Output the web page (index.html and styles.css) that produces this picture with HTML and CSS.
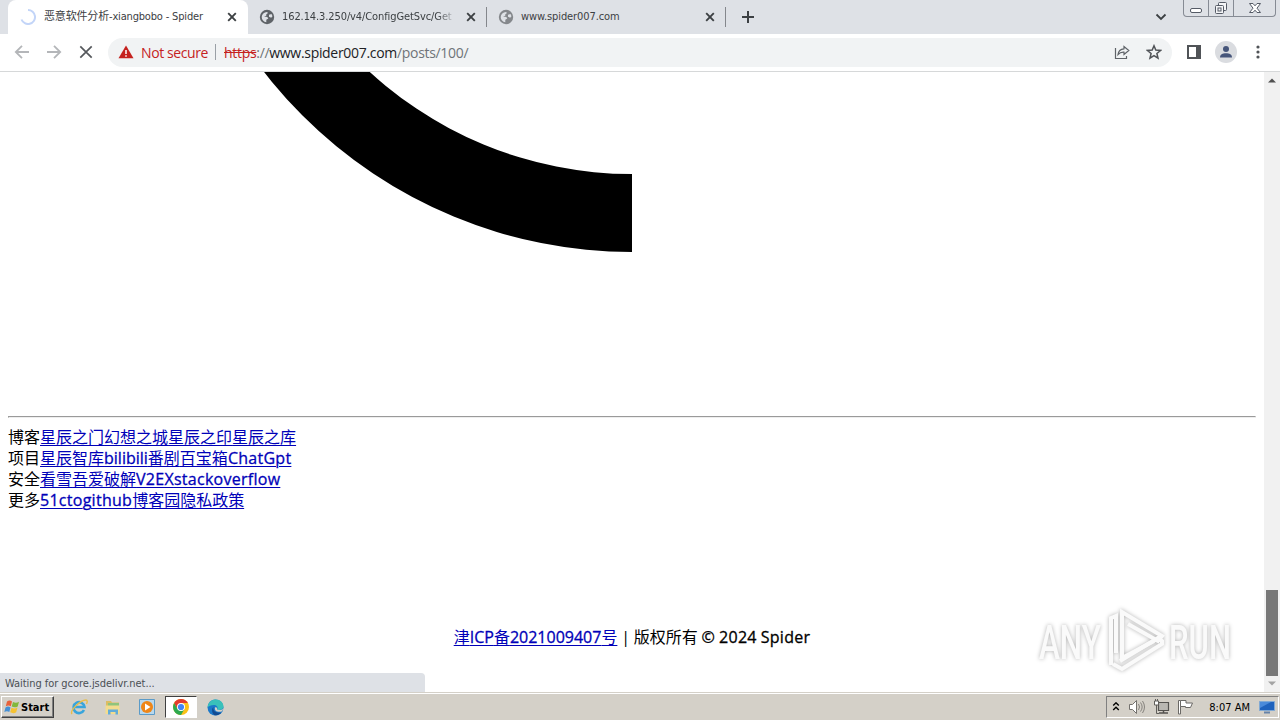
FILE: index.html
```html
<!DOCTYPE html>
<html lang="zh">
<head>
    <meta charset="UTF-8">
    <meta name="viewport" content="width=device-width, initial-scale=1.0">
    <title>恶意软件分析-xiangbobo - Spider</title>
    <link rel="stylesheet" href="styles.css">
</head>
<body>

<!-- shared icons -->
<svg class="defs" width="0" height="0">
    <symbol id="close" viewBox="0 0 10 10"><path d="M1.2 1.2l7.6 7.6M8.800 1.2L1.2 8.800" fill="none" stroke="#3c4043" stroke-width="1.9"/></symbol>
    <symbol id="globe" viewBox="0 0 16 16">
        <circle cx="8" cy="8" r="7.2" fill="currentColor"/>
        <path d="M2.700 8C3 4.800 5 3 8 2.900L9 4 7.300 5.200v1.500L5 7.600l3.300.3 1 1.700-2 1.100v2.500C4.800 12.800 2.700 11 2.700 8zM10 5.800l2.500-.8 1 2.300-1.300 1.400L10 7.700z" fill="#dee1e6"/>
    </symbol>
</svg>

<div class="tab-strip">
    <div class="tab active">
        <svg class="spinner" width="16" height="16" viewBox="0 0 16 16"><path d="M8 1a7 7 0 1 1-6.500 9.500" fill="none" stroke="#c3d5f8" stroke-width="2"/></svg>
        <span class="tab-title title-one">恶意软件分析-xiangbobo - Spider</span>
        <svg class="tab-close" width="10" height="10"><use href="#close"/></svg>
    </div>
    <div class="tab">
        <svg class="globe" width="16" height="16"><use href="#globe"/></svg>
        <span class="tab-title title-two">162.14.3.250/v4/ConfigGetSvc/Get</span>
        <svg class="tab-close" width="10" height="10"><use href="#close"/></svg>
    </div>
    <div class="tab">
        <svg class="globe light" width="16" height="16"><use href="#globe"/></svg>
        <span class="tab-title title-three">www.spider007.com</span>
        <svg class="tab-close" width="10" height="10"><use href="#close"/></svg>
    </div>
    <svg class="new-tab" width="14" height="14" viewBox="0 0 14 14"><path d="M7 1v12M1 7h12" stroke="#3c4043" stroke-width="2"/></svg>
    <svg class="tab-search" width="12" height="8" viewBox="0 0 12 8"><path d="M1.5 1.5L6 6l4.500-4.500" fill="none" stroke="#3c4043" stroke-width="1.8"/></svg>
    <div class="window-buttons">
        <span class="win-btn min"><svg width="14" height="14" viewBox="0 0 14 14"><rect x="1.500" y="7.500" width="11" height="4" rx="1.500" fill="#fff" stroke="#555b66"/></svg></span>
        <span class="win-btn restore"><svg width="14" height="14" viewBox="0 0 14 14" fill="#f4f5f7" stroke="#555b66"><rect x="4.500" y="1.500" width="8" height="8" rx="1"/><rect x="1.500" y="4.500" width="8" height="8" rx="1"/><rect x="4" y="7" width="3" height="3"/></svg></span>
        <span class="win-btn exit"><svg width="14" height="14" viewBox="0 0 14 14"><path d="M1.500 2.500h3.500l2 2.300 2-2.300h3.500L9 7.200l3.500 4.300H9L7 9.200l-2 2.300H1.500L5 7.200z" fill="#fff" stroke="#555b66"/></svg></span>
    </div>
</div>

<div class="toolbar">
    <div class="nav">
        <svg width="16" height="16" viewBox="0 0 16 16" fill="none" stroke="#b4b6b9" stroke-width="1.800"><path d="M15 8H2.200M8 1.800L1.800 8 8 14.200"/></svg>
        <svg width="16" height="16" viewBox="0 0 16 16" fill="none" stroke="#b4b6b9" stroke-width="1.800"><path d="M1 8h12.800M8 1.800L14.200 8 8 14.200"/></svg>
        <svg width="16" height="16" viewBox="0 0 16 16" fill="none" stroke="#55585c" stroke-width="1.700"><path d="M2.300 2.300l11.400 11.400M13.700 2.300L2.300 13.700"/></svg>
    </div>
    <div class="omnibox">
        <svg class="warning" width="16" height="14" viewBox="0 0 16 14"><path d="M8 .5L15.500 13.300H.5z" fill="#c5221f"/><path d="M8 5v4M8 10.200v1.600" stroke="#fff" stroke-width="1.500"/></svg>
        <span class="not-secure">Not secure</span>
        <span class="separator"></span>
        <span class="url"><span class="scheme">https</span><span class="path">://</span>www.spider007.com<span class="path">/posts/100/</span></span>
        <svg class="share" width="16" height="16" viewBox="0 0 16 16" fill="none" stroke="#5f6368" stroke-width="1.200"><path d="M1.500 4v10.500h11V12"/><path d="M4 10.500c.4-3.800 2.500-5.500 6-5.700V2.500l4.800 4-4.800 4V8.200C7.300 8 5.500 8.800 4 10.500z"/></svg>
        <svg class="star" width="16" height="16" viewBox="0 0 16 16"><path d="M8 1.800l1.800 4.300 4.700.4-3.600 3 1.100 4.600-4-2.500-4 2.500 1.100-4.600-3.600-3 4.700-.4z" fill="none" stroke="#505357" stroke-width="1.500"/></svg>
    </div>
    <svg class="side-panel" width="14" height="14" viewBox="0 0 14 14"><path d="M1 1h12v12H1z" fill="none" stroke="#505357" stroke-width="2"/><path d="M9 1h4v12H9z" fill="#505357"/></svg>
    <svg class="avatar" width="22" height="22" viewBox="0 0 22 22"><circle cx="11" cy="11" r="11" fill="#dadce0"/><circle cx="11" cy="8" r="3" fill="#46557a"/><path d="M5 16.500c0-3 2.500-4.200 6-4.200s6 1.200 6 4.200z" fill="#46557a"/></svg>
    <svg class="menu" width="4" height="14" viewBox="0 0 4 14" fill="#505357"><circle cx="2" cy="2" r="1.600"/><circle cx="2" cy="7" r="1.600"/><circle cx="2" cy="12" r="1.600"/></svg>
</div>

<div class="viewport">
    <div class="page">
        <svg class="arc" width="1248" height="180" viewBox="8 72 1248 180"><path d="M632 252A466 466 0 0 1 166 -214H244A388 388 0 0 0 632 174z"/></svg>
        <hr>
        <div class="links">
            <div>博客<a href="#">星辰之门</a><a href="#">幻想之城</a><a href="#">星辰之印</a><a href="#">星辰之库</a></div>
            <div>项目<a href="#">星辰智库</a><a href="#" class="en bili">bilibili</a><a href="#">番剧</a><a href="#">百宝箱</a><a href="#" class="en">ChatGpt</a></div>
            <div>安全<a href="#">看雪</a><a href="#">吾爱破解</a><a href="#" class="en">V2EX</a><a href="#" class="en">stackoverflow</a></div>
            <div>更多<a href="#" class="en">51cto</a><a href="#" class="en">github</a><a href="#">博客园</a><a href="#">隐私政策</a></div>
        </div>
        <p class="copyright"><a href="#">津<span class="en icp">ICP</span>备<span class="en num">2021009407</span>号</a> | 版权所有 <span class="en">© 2024 Spider</span></p>
        <svg class="watermark" width="204" height="70" viewBox="1034 606 204 70">
            <g class="mark-text">
                <text x="1039" y="659" textLength="62" lengthAdjust="spacingAndGlyphs">ANY</text>
                <text x="1169" y="659" textLength="62" lengthAdjust="spacingAndGlyphs">RUN</text>
            </g>
            <g class="mark-play">
                <path d="M1122 628v30l32-17"/>
                <path d="M1111 665v-47l5-2v37M1122 640v-28l40 24-4 5-30-17M1113 664l9 5 40-25v-3l-4-3-38 23"/>
            </g>
        </svg>
    </div>
    <div class="scrollbar">
        <svg width="8" height="5" viewBox="0 0 8 5"><path d="M0 4.500L4 .5l4 4z" fill="#505050"/></svg>
        <div class="thumb"></div>
        <svg class="down" width="8" height="5" viewBox="0 0 8 5"><path d="M0 .5l4 4 4-4z" fill="#a3a3a3"/></svg>
    </div>
    <div class="status">Waiting for gcore.jsdelivr.net...</div>
</div>

<div class="taskbar">
    <div class="start">
        <svg width="17" height="16" viewBox="0 0 17 16"><path d="M3 2.500c2-1.500 3.700-1 5 0L6.800 7.300c-1.500-1-3-1.200-5 0z" fill="#e8623a"/><path d="M9 3c2 1 4 1 6-.2L13.700 7.500c-2 1.200-4 1-6 0z" fill="#82b83c"/><path d="M1.500 8.500c2-1.400 3.500-1 5 0L5.300 13c-1.500-1-3-1.200-5 0z" fill="#4590d5"/><path d="M7.500 8.800c2 1 4 1 6-.2l-1.300 4.700c-2 1.200-4 1-6 0z" fill="#f5c232"/></svg>
        <span>Start</span>
    </div>
    <div class="quick ie"><svg width="18" height="18" viewBox="0 0 18 18"><path d="M14 12A5.500 5.500 0 1 1 14.500 9H5" fill="none" stroke="#39a5dc" stroke-width="2.600"/><path d="M2 16C-.5 13 10 2 16 2c1.500 0 1.500 2 .5 4" fill="none" stroke="#e9bd48" stroke-width="1.400"/></svg></div>
    <div class="quick"><svg width="18" height="18" viewBox="0 0 18 18"><path d="M2 3h5l1 1.500h7V15H2z" fill="#dcbd62"/><path d="M4 5h11v8H4z" fill="#8fc47c"/><path d="M1.500 7.500h14V16h-14z" fill="#f3dc8e"/><path d="M4 16.500v-5h10v5h-2.500V14h-5v2.500z" fill="#62acd8"/></svg></div>
    <div class="quick"><svg width="18" height="18" viewBox="0 0 18 18"><path d="M1.500 1.500h15v15h-15z" fill="#b8d8ed" stroke="#5b9bc8"/><circle cx="9" cy="9" r="6" fill="#ee8618"/><path d="M7 5.500v7l5.500-3.500z" fill="#fff"/></svg></div>
    <div class="quick pressed"><svg width="16" height="16" viewBox="0 0 16 16"><circle cx="8" cy="8" r="8" fill="#fbc116"/><path d="M1.100 4A8 8 0 0 1 14.900 4H8L4.500 10z" fill="#e33b2e"/><path d="M1.100 4A8 8 0 0 0 8 16l3.500-6H4.500z" fill="#2da94f"/><circle cx="8" cy="8" r="4" fill="#fff"/><circle cx="8" cy="8" r="3.100" fill="#4285f4"/></svg></div>
    <div class="quick edge"><svg width="17" height="17" viewBox="0 0 17 17"><circle cx="8.500" cy="8.500" r="8" fill="#1b78c9"/><path d="M.5 8.500C1 3 5 .5 8.500.5c5 0 8 3.500 8 7 0 3-4 4-6.500 3 1.500-2 0-4.500-3-4.500-3 0-5.500 1-6.500 2.500z" fill="#39c1ba"/><path d="M6.500 8c-1 4 3 6.500 8 5.500 0 0-3 3.200-7 2.800C4.500 14 4.500 9.500 6.500 8z" fill="#134b91"/><path d="M8 8.500c1.500-1 2.500.5 2 2 2 .8 4.500.6 6.200-.8l-1 2.500C11 14 7 12 8 8.500z" fill="#d4d0c8"/></svg></div>
    <div class="tray">
        <svg class="chevrons" width="8" height="10" viewBox="0 0 8 10"><path d="M1.200 3.500L4 .8l2.800 2.700M1.200 8L4 5.200 6.800 8" fill="none" stroke="#000" stroke-width="1.400"/></svg>
        <svg class="volume" width="17" height="16" viewBox="0 0 17 16"><path d="M1.500 5.500h3l4-4v13l-4-4h-3z" fill="#fff" stroke="#73716d"/><path d="M10.500 5q2 3 0 6M12.500 3.500q3.300 4.500 0 9M14.500 2q4 6 0 12" fill="none" stroke="#85827d"/></svg>
        <svg class="network" width="17" height="16" viewBox="0 0 17 16"><path d="M5.500 3.500h10v8h-10z" fill="#b9b7b2" stroke="#54524f" stroke-width="1.200"/><path d="M6 14h9M10.500 12v2" stroke="#54524f" stroke-width="1.500"/><path d="M1.500 2h4v4h-4z" fill="#fff" stroke="#605e5a"/><path d="M3.500 6v8.500H6M2.500 0v2M4.500 0v2" fill="none" stroke="#605e5a"/></svg>
        <svg class="flag" width="17" height="16" viewBox="0 0 17 16"><path d="M1.500 1.500h2V15h-2z" fill="#fff" stroke="#6b6966"/><path d="M3.500 1.500h5.500V4h6.500l-2 4.500h-5V7.500h-5z" fill="#fff" stroke="#6b6966"/></svg>
        <span class="clock">8:07 AM</span>
        <svg class="desktop" width="16" height="14" viewBox="0 0 16 14"><path d="M.5 1.500h15v9H.5z" fill="#1f62bd" stroke="#81a9d4"/><path d="M1 8L12 2H1z" fill="#4a8ada"/><path d="M5 12.500h6" stroke="#6683a8" stroke-width="2"/></svg>
    </div>
</div>

</body>
</html>
```
FILE: styles.css
```css
* {
    box-sizing: border-box;
}

body {
    margin: 0;
    width: 1280px;
    height: 720px;
    overflow: hidden;
    display: flex;
    flex-direction: column;
    background: #fff;
    font-family: "Open Sans", "Noto Sans CJK SC", sans-serif;
}

svg {
    display: block;
    flex: none;
}

.defs {
    display: none;
}

/* tabs */
.tab-strip {
    height: 34px;
    flex: none;
    display: flex;
    align-items: center;
    padding-left: 8px;
    background: #dee1e6;
}

.tab {
    width: 239px;
    height: 34px;
    display: flex;
    align-items: center;
    padding: 0 11px;
    position: relative;
    color: #5f6368;
}

.tab:not(.active)::after {
    content: "";
    width: 1px;
    height: 20px;
    background: #84878c;
    position: absolute;
    right: 0;
    top: 7px;
}

.tab.active {
    width: 240px;
    padding-left: 12px;
    background: #fff;
    border-radius: 8px 8px 0 0;
}

.globe.light {
    color: #85888c;
}

.tab-title {
    flex: 1;
    margin: 0 10px 0 7px;
    white-space: nowrap;
    font-family: "DejaVu Sans Condensed", "DejaVu Sans", "Noto Sans CJK SC", sans-serif;
    font-stretch: condensed;
    font-size: 11px;
    line-height: 20px;
    letter-spacing: -0.1px;
    color: #3c4043;
}

.active .tab-title {
    margin-left: 8px;
    letter-spacing: -0.17px;
}

.title-two {
    -webkit-mask-image: linear-gradient(to right, #000 155px, transparent 175px);
    mask-image: linear-gradient(to right, #000 155px, transparent 175px);
}

.new-tab {
    margin-left: 15px;
}

.tab-search {
    margin-left: auto;
    margin-right: 16px;
}

.window-buttons {
    width: 93px;
    height: 17px;
    margin-right: 4px;
    align-self: flex-start;
    display: flex;
    border: 1px solid #868b94;
    border-top: 0;
    border-radius: 0 0 4px 4px;
    overflow: hidden;
}

.win-btn {
    width: 25px;
    display: flex;
    justify-content: center;
    padding-top: 1px;
    border-right: 1px solid #868b94;
}

.win-btn.exit {
    flex: 1;
    border-right: 0;
}

/* toolbar */
.toolbar {
    height: 38px;
    flex: none;
    display: flex;
    align-items: center;
    padding: 0 20px 1px 14px;
    border-bottom: 1px solid #d6d8d9;
}

.nav {
    display: flex;
    gap: 16px;
}

.omnibox {
    width: 1064px;
    height: 29px;
    margin-left: 14px;
    display: flex;
    align-items: center;
    padding: 0 10px;
    border-radius: 15px;
    background: #f1f3f4;
    font-family: "Open Sans", sans-serif;
    font-size: 14px;
    letter-spacing: -0.31px;
    color: #202124;
}

.not-secure {
    width: 68px;
    margin-left: 7px;
    white-space: nowrap;
    letter-spacing: -0.4px;
    color: #c5221f;
}

.separator {
    width: 1px;
    height: 16px;
    margin: 0 8px 0 6px;
    background: #9aa0a6;
}

.scheme {
    color: #c5221f;
    text-decoration: line-through;
}

.path {
    color: #6f7378;
}

.share {
    margin-left: auto;
}

.star {
    margin-left: 16px;
}

.side-panel {
    margin-left: 15px;
}

.avatar {
    margin-left: 14px;
}

.menu {
    margin-left: 19px;
}

/* page */
.viewport {
    flex: 1;
    display: flex;
    position: relative;
    min-height: 0;
}

.page {
    flex: 1;
    padding: 0 8px;
    position: relative;
    font-size: 16px;
    color: #000;
}

hr {
    margin: 164px 0 9px;
}

.links {
    line-height: 21px;
    white-space: nowrap;
}

.en {
    letter-spacing: 0.27px;
    -webkit-text-stroke: 0.3px;
}

.bili {
    letter-spacing: 0;
}

.icp,
.num {
    letter-spacing: 0;
}

a {
    color: #0000b8;
    text-decoration: underline;
    text-decoration-thickness: 1px;
    text-underline-offset: 2px;
}

.copyright {
    margin: 115px 0 0;
    line-height: 22px;
    text-align: center;
    word-spacing: -0.4px;
}

.watermark {
    position: absolute;
    left: 1034px;
    top: 534px;
    overflow: visible;
    filter: drop-shadow(0 0 2px rgba(0, 0, 0, 0.3));
}

.mark-text {
    font-family: Roboto, sans-serif;
    font-size: 49px;
    font-weight: 500;
    fill: #fafafa;
}

.mark-play path {
    fill: none;
    stroke: #fafafa;
    stroke-width: 4;
}

.scrollbar {
    width: 16px;
    display: flex;
    flex-direction: column;
    align-items: center;
    padding: 6px 0;
    background: #f1f1f1;
}

.thumb {
    width: 12px;
    height: 86px;
    margin: auto 0 5px;
    background: #787878;
}

.status {
    position: absolute;
    left: 0;
    bottom: 0;
    width: 425px;
    height: 19px;
    padding-left: 5px;
    border-radius: 0 4px 0 0;
    background: #dee1e6;
    font-family: "DejaVu Sans Condensed", "DejaVu Sans", sans-serif;
    font-stretch: condensed;
    font-size: 11px;
    line-height: 21px;
    letter-spacing: -0.05px;
    color: #4b4f54;
}

/* taskbar */
.taskbar {
    height: 28px;
    flex: none;
    display: flex;
    align-items: center;
    padding: 1px 1px 0;
    border-top: 1px solid #d4d0c8;
    box-shadow: inset 0 1px 0 #fff;
    background: #d4d0c8;
    font-family: "DejaVu Sans Condensed", "DejaVu Sans", sans-serif;
    font-stretch: condensed;
    font-size: 11px;
    color: #000;
}

.start {
    width: 53px;
    height: 22px;
    display: flex;
    align-items: center;
    padding-left: 2px;
    border: 1px solid;
    border-color: #fff #404040 #404040 #fff;
    box-shadow: inset -1px -1px 0 #808080;
    font-weight: bold;
}

.quick {
    width: 32px;
    height: 22px;
    margin-right: 2px;
    display: flex;
    align-items: center;
    justify-content: center;
}

.quick.ie {
    margin-left: 9px;
}

.quick.pressed {
    border: 1px solid;
    border-color: #404040 #fff #fff #404040;
    background: #fff;
}

.tray {
    width: 173px;
    height: 22px;
    margin-left: auto;
    display: flex;
    align-items: center;
    padding: 0 3px 0 5px;
    border: 1px solid;
    border-color: #808080 #fff #fff #808080;
}

.volume {
    margin-left: 8px;
}

.network {
    margin-left: 8px;
}

.flag {
    margin-left: 7px;
}

.clock {
    margin-left: auto;
    margin-right: 9px;
    white-space: nowrap;
}
```
